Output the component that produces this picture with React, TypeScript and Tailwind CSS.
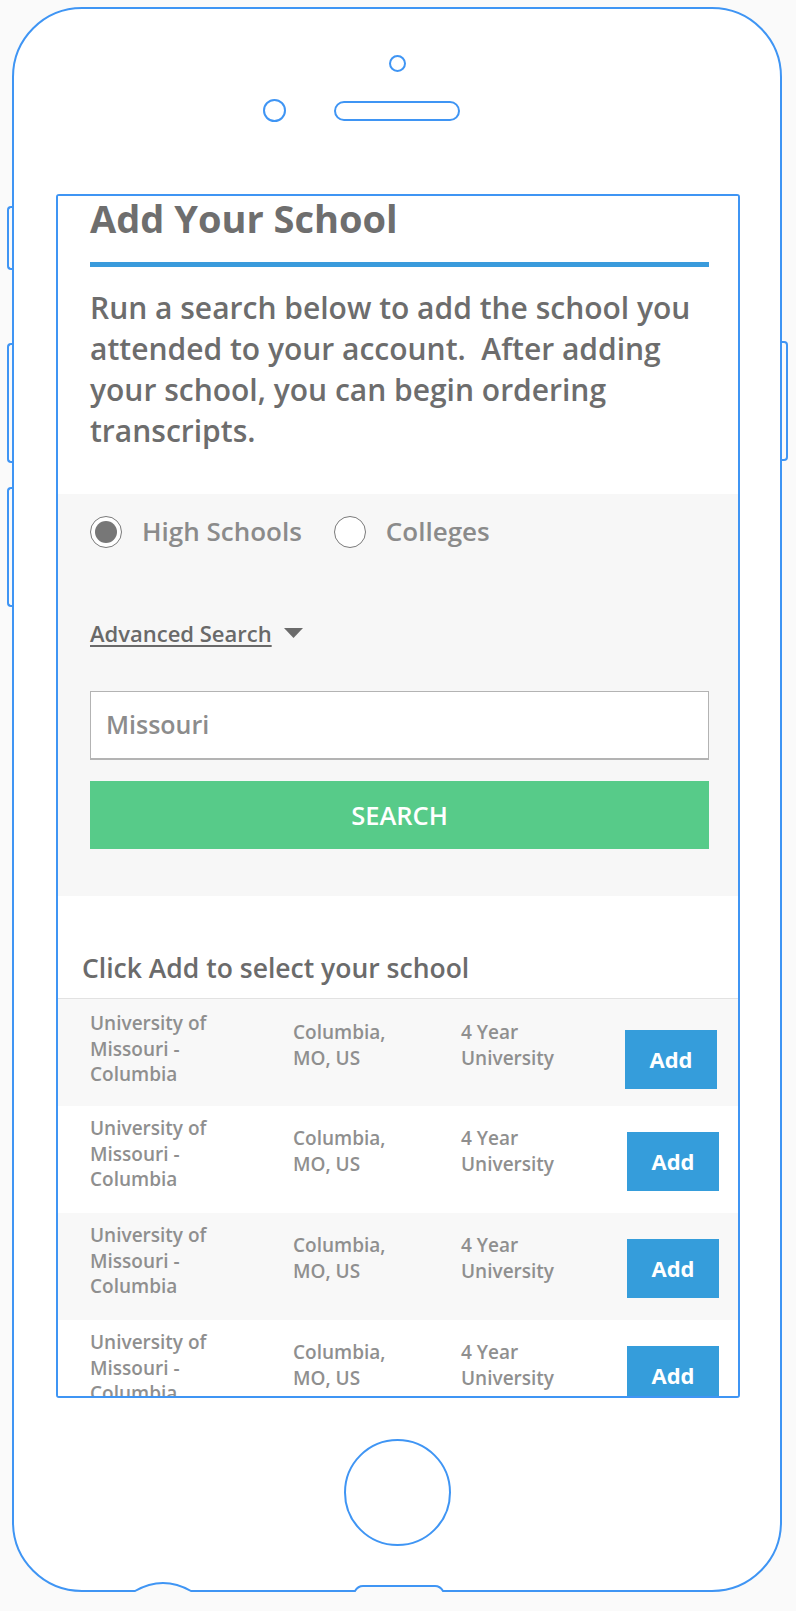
import React from "react";

const rows = [
  { name: "University of Missouri - Columbia", city: "Columbia, MO, US", kind: "4 Year University" },
  { name: "University of Missouri - Columbia", city: "Columbia, MO, US", kind: "4 Year University" },
  { name: "University of Missouri - Columbia", city: "Columbia, MO, US", kind: "4 Year University" },
  { name: "University of Missouri - Columbia", city: "Columbia, MO, US", kind: "4 Year University" },
];

function SchoolRow({ name, city, kind, shaded, first }: { name: string; city: string; kind: string; shaded: boolean; first: boolean }) {
  return (
    <div className={`flex h-[107px] shrink-0 items-start pl-[32px] text-[19px] font-semibold leading-[25.5px] text-[#8f8f8f] ${shaded ? "bg-[#f8f8f8]" : "bg-white"}`}>
      <div className={`w-[203px] ${first ? "pt-[12px]" : "pt-[10px]"}`}>
        <div className="w-[145px]">{name}</div>
      </div>
      <div className={`w-[168px] ${first ? "pt-[21px]" : "pt-[20px]"}`}>
        <div className="w-[105px]">{city}</div>
      </div>
      <div className={`w-[164px] ${first ? "pt-[21px]" : "pt-[20px]"}`}>
        <div className="w-[100px]">{kind}</div>
      </div>
      <button className={`flex h-[59px] w-[92px] items-center justify-center bg-[#359ddb] text-[22px] font-bold text-white ${first ? "mt-[31px]" : "ml-[2px] mt-[26px]"}`}>
        Add
      </button>
    </div>
  );
}

export default function App() {
  return (
    <div className="relative h-[1611px] w-[796px] overflow-hidden bg-[#fafafa] font-['Open_Sans',sans-serif]">
      {/* side buttons */}
      <div className="absolute left-[7px] top-[206px] h-[64px] w-[7px] rounded-l-[4px] border-2 border-r-0 border-[#3f95f4]" />
      <div className="absolute left-[7px] top-[343px] h-[120px] w-[7px] rounded-l-[4px] border-2 border-r-0 border-[#3f95f4]" />
      <div className="absolute left-[7px] top-[487px] h-[120px] w-[7px] rounded-l-[4px] border-2 border-r-0 border-[#3f95f4]" />
      <div className="absolute left-[781px] top-[341px] h-[120px] w-[7px] rounded-r-[4px] border-2 border-l-0 border-[#3f95f4]" />

      {/* phone body */}
      <div className="ml-[12px] mt-[7px] flex h-[1585px] w-[770px] flex-col items-center rounded-[70px] border-2 border-[#3f95f4] bg-white">
        <div className="mt-[46px] h-[17px] w-[17px] rounded-full border-2 border-[#3f95f4]" />
        <div className="mt-[27px] flex items-center gap-[48px]">
          <div className="h-[23px] w-[23px] rounded-full border-2 border-[#3f95f4]" />
          <div className="h-[20px] w-[126px] rounded-full border-2 border-[#3f95f4]" />
          <div className="h-[23px] w-[23px]" />
        </div>

        {/* screen */}
        <div className="ml-[42px] mt-[72px] flex h-[1204px] w-[684px] shrink-0 flex-col self-start overflow-hidden rounded-[3px] border-2 border-[#3f95f4]">
          <div className="shrink-0 bg-white pl-[32px] pr-[29px]">
            <h1 className="text-[38px] font-bold leading-[44px] text-[#6e6e6e]">Add Your School</h1>
            <div className="mt-[22px] h-[5px] bg-[#3a9bdc]" />
            <p className="mt-[20px] pb-[43px] text-[30px] font-semibold leading-[41px] text-[#6d6d6d]">
              Run a search below to add the school you attended to your account.&nbsp; After adding your school, you can begin ordering transcripts.
            </p>
          </div>

          <div className="shrink-0 bg-[#f7f7f7] pb-[47px] pl-[32px] pr-[29px] pt-[18px]">
            <div className="flex items-center">
              <div className="flex h-[32px] w-[32px] items-center justify-center rounded-full border border-[#7a7a7a] bg-white">
                <div className="h-[22px] w-[22px] rounded-full bg-[#777777]" />
              </div>
              <span className="ml-[20px] text-[26px] font-semibold text-[#8b8b8b]">High Schools</span>
              <div className="ml-[32px] h-[32px] w-[32px] rounded-full border border-[#7a7a7a] bg-white" />
              <span className="ml-[20px] text-[26px] font-semibold text-[#8b8b8b]">Colleges</span>
            </div>

            <div className="mt-[67px] flex items-center">
              <span className="text-[22px] font-semibold leading-[30px] text-[#696969] underline decoration-[1.5px] underline-offset-[3px]">Advanced Search</span>
              <svg className="ml-[12px]" width="19" height="10" viewBox="0 0 19 10">
                <path d="M0 0 H19 L9.5 10 Z" fill="#6b6b6b" />
              </svg>
            </div>

            <div className="mt-[43px] flex h-[69px] items-center border border-b-2 border-[#b3b3b3] bg-white pl-[15px] text-[25px] font-semibold text-[#8c8c8c]">
              Missouri
            </div>
            <button className="mt-[21px] flex h-[68px] w-full items-center justify-center bg-[#57cb89] text-[25.5px] font-semibold text-white">
              SEARCH
            </button>
          </div>

          <div className="shrink-0 border-b border-[#e2e2e2] bg-white pb-[10px] pl-[24px] pt-[52px] text-[26.5px] font-semibold leading-[40px] text-[#6b6b6b]">
            Click Add to select your school
          </div>

          {rows.map((r, i) => (
            <SchoolRow key={i} {...r} shaded={i % 2 === 0} first={i === 0} />
          ))}
        </div>

        <div className="mt-[41px] h-[107px] w-[107px] shrink-0 rounded-full border-2 border-[#3f95f4]" />
      </div>

      {/* bottom notches */}
      <svg className="absolute left-0 top-[1570px]" width="796" height="30" viewBox="0 0 796 30">
        <path d="M133 23 L135 21 Q163 5 191 21 L193 23 Z" fill="#fafafa" />
        <path d="M129 21 L135 21 Q163 5 191 21 L197 21" fill="none" stroke="#3f95f4" strokeWidth="2" />
        <path d="M353 23 L355 21 Q358 16 363 16 L435 16 Q440 16 443 21 L445 23 Z" fill="#fafafa" />
        <path d="M349 21 L355 21 Q358 16 363 16 L435 16 Q440 16 443 21 L449 21" fill="none" stroke="#3f95f4" strokeWidth="2" />
      </svg>
    </div>
  );
}
